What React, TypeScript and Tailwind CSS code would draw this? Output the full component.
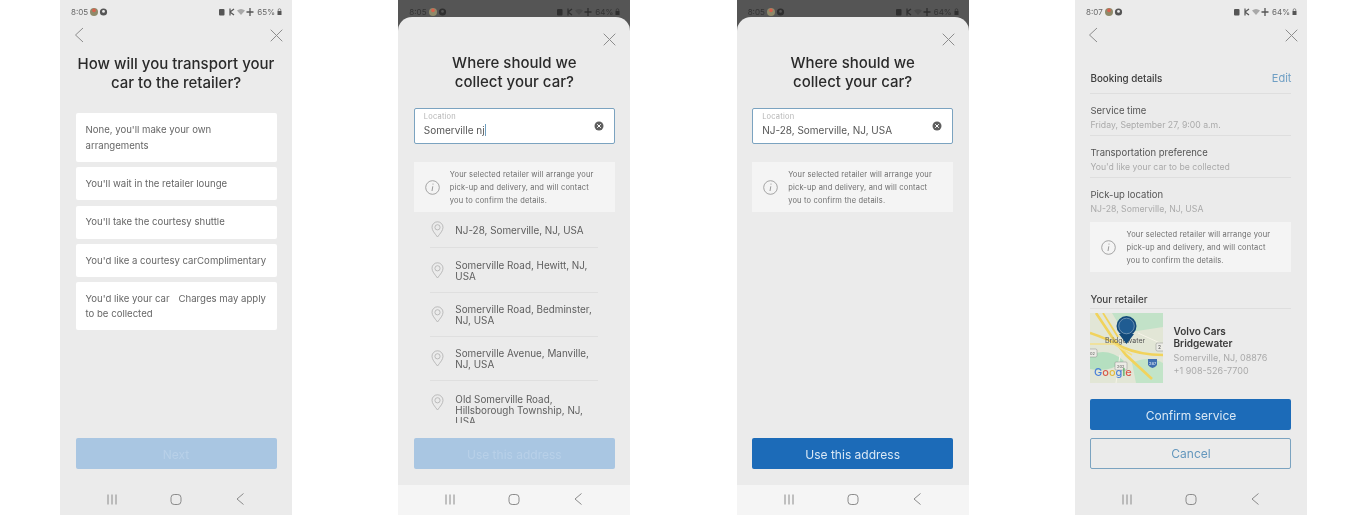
import React from "react";

function Back() {
  return (
    <svg width="10" height="16" viewBox="0 0 10 16" fill="none" stroke="#8c8c8c" strokeWidth="1">
      <path d="M9 1 L1.5 8 L9 15" />
    </svg>
  );
}

function Close() {
  return (
    <svg width="13" height="13" viewBox="0 0 13 13" fill="none" stroke="#8c8c8c" strokeWidth="1">
      <path d="M0.7 0.7 L12.3 12.3 M12.3 0.7 L0.7 12.3" />
    </svg>
  );
}

function Status({ time, pct, dim = false }: { time: string; pct: string; dim?: boolean }) {
  const c = dim ? "#2f2f2f" : "#555555";
  const tc = dim ? "text-[#333333]" : "text-[#666666]";
  return (
    <div className={`flex items-center justify-between pl-[11px] pr-[10px] ${dim ? "h-[17px] pt-[6px]" : "h-[22px] pt-[1px]"}`}>
      <div className="flex items-center gap-[1px]">
        <span className={`text-[8px] leading-none ${tc}`}>{time}</span>
        <svg width="20" height="10" viewBox="0 0 20 10">
          <circle cx="5" cy="5" r="4" fill="#8f8a6a" />
          <circle cx="5" cy="3.4" r="1.8" fill="#d9604c" />
          <circle cx="14.5" cy="5" r="3.6" fill={c} />
          <circle cx="14.5" cy="4.4" r="1.4" fill={dim ? "#555555" : "#ebebeb"} />
        </svg>
      </div>
      <div className="flex items-center gap-[1px]">
        <svg width="36" height="10" viewBox="0 0 36 10" className="mr-[1px]">
          <rect x="0" y="2" width="5.5" height="6.5" rx="1" fill={c} />
          <path d="M11 1.5 V8.5 M11 5 L15 2 M11 5 L15 8" stroke={c} strokeWidth="1.2" fill="none" />
          <path d="M18 3.5 Q22 0.5 26 3.5 L22 8 Z" fill={dim ? "#4a4a4a" : "#a8a8a8"} />
          <path d="M31 1 V9 M27.5 5 H34.5" stroke={c} strokeWidth="1.3" />
        </svg>
        <span className={`text-[8px] leading-none ${tc}`}>{pct}</span>
        <svg width="5" height="8" viewBox="0 0 5 8" className="ml-[1px]">
          <rect x="0.5" y="3" width="4" height="4" fill={c} />
          <path d="M1.2 3 V2 a1.3 1.3 0 0 1 2.6 0 V3" stroke={c} strokeWidth="0.6" fill="none" />
        </svg>
      </div>
    </div>
  );
}

function Nav({ light = false }: { light?: boolean }) {
  return (
    <div className={`h-[30px] flex items-center justify-between px-[45px] pb-[2px] shrink-0 ${light ? "bg-[#f5f5f5]" : ""}`}>
      <svg width="14" height="11" viewBox="0 0 14 11" fill="none" stroke="#8a8a8a" strokeWidth="1">
        <path d="M3 0.5 V10.5 M7 0.5 V10.5 M11 0.5 V10.5" />
      </svg>
      <svg width="14" height="11" viewBox="0 0 14 11" fill="none" stroke="#8a8a8a" strokeWidth="1">
        <rect x="2" y="0.5" width="10" height="10" rx="3.2" />
      </svg>
      <svg width="14" height="12" viewBox="0 0 14 12" fill="none" stroke="#8a8a8a" strokeWidth="1">
        <path d="M10.5 0.5 L4 6 L10.5 11.5" />
      </svg>
    </div>
  );
}

function Info({ className = "" }: { className?: string }) {
  return (
    <div className={`h-[50px] bg-[#f4f4f4] flex items-center pl-[11px] ${className}`}>
      <svg width="15" height="15" viewBox="0 0 15 15" fill="none" className="shrink-0">
        <circle cx="7.5" cy="7.5" r="6.8" stroke="#8f8f8f" strokeWidth="0.8" />
        <path d="M8 3.6 v1 M7.8 6.3 L7 11" stroke="#8f8f8f" strokeWidth="0.9" />
      </svg>
      <p className="ml-[10px] text-[7.5px] leading-[13px] tracking-[0.18px] text-[#6c6c6c] whitespace-nowrap">
        Your selected retailer will arrange your
        <br />
        pick-up and delivery, and will contact
        <br />
        you to confirm the details.
      </p>
    </div>
  );
}

function Pin() {
  return (
    <svg width="13" height="17" viewBox="0 0 13 17" fill="none" stroke="#b4b4b4" strokeWidth="0.9" className="shrink-0">
      <path d="M6.5 16 C3.5 12 1 9.5 1 6.3 A5.5 5.5 0 0 1 12 6.3 C12 9.5 9.5 12 6.5 16 Z" />
      <circle cx="6.5" cy="6.3" r="2.6" />
    </svg>
  );
}

function Card({ h, children }: { h: string; children: React.ReactNode }) {
  return (
    <div className={`bg-white rounded-[2px] px-[10px] flex items-center text-[9.6px] leading-[15.5px] text-[#666666] ${h}`}>
      <div className="whitespace-nowrap">{children}</div>
    </div>
  );
}

function Heading({ children }: { children: React.ReactNode }) {
  return <h1 className="text-center text-[15px] leading-[19px] font-medium text-[#2a2a2a]">{children}</h1>;
}

function Button({ children, on = false }: { children: React.ReactNode; on?: boolean }) {
  return (
    <div className={`h-[31px] pt-[2px] rounded-[2px] flex items-center justify-center text-[12px] ${on ? "bg-[#1c6bb8] text-[#d9e8f5]" : "bg-[#a9c6e2] text-[#b8d0e8]"}`}>
      {children}
    </div>
  );
}

function Phone1() {
  return (
    <div className="w-[232px] h-[515px] bg-[#ebebeb] flex flex-col">
      <Status time="8:05" pct="65%" />
      <div className="flex justify-between items-center pl-[14px] pr-[9px] mt-[5px] h-[16px]">
        <Back />
        <Close />
      </div>
      <div className="mt-[11px]">
        <Heading>
          How will you transport your
          <br />
          car to the retailer?
        </Heading>
      </div>
      <div className="mt-[21px] mx-[15.5px] flex flex-col gap-[5.3px]">
        <Card h="h-[49px]">
          None, you'll make your own
          <br />
          arrangements
        </Card>
        <Card h="h-[33px]">You'll wait in the retailer lounge</Card>
        <Card h="h-[33px]">You'll take the courtesy shuttle</Card>
        <Card h="h-[33px]">You'd like a courtesy carComplimentary</Card>
        <Card h="h-[48px]">
          <span className="mr-[9px]">You'd like your car</span>Charges may apply
          <br />
          to be collected
        </Card>
      </div>
      <div className="mt-auto mx-[15.5px] mb-[16px]">
        <Button>Next</Button>
      </div>
      <Nav />
    </div>
  );
}

const places: { lines: string[]; h: string; last?: boolean }[] = [
  { lines: ["NJ-28, Somerville, NJ, USA"], h: "h-[36px]" },
  { lines: ["Somerville Road, Hewitt, NJ,", "USA"], h: "h-[45px]" },
  { lines: ["Somerville Road, Bedminster,", "NJ, USA"], h: "h-[44px]" },
  { lines: ["Somerville Avenue, Manville,", "NJ, USA"], h: "h-[44px]" },
  { lines: ["Old Somerville Road,", "Hillsborough Township, NJ,", "USA"], h: "h-[42px]", last: true },
];

function Sheet({ value, caret = false, list = false, on = false }: { value: string; caret?: boolean; list?: boolean; on?: boolean }) {
  return (
    <div className="w-[232px] h-[515px] bg-[#555555] flex flex-col">
      <Status time="8:05" pct="64%" dim />
      <div className="flex-1 bg-[#ebebeb] rounded-t-[14px] flex flex-col min-h-0">
        <div className="flex justify-end pr-[14px] pt-[16px] h-[30px]">
          <Close />
        </div>
        <div className="mt-[6px]">
          <Heading>
            Where should we
            <br />
            collect your car?
          </Heading>
        </div>
        <div className="mt-[17px] mx-[15.5px] h-[36px] bg-white border border-[#7ba3c0] rounded-[2px] pl-[9px] pr-[10px] pb-[3px] flex items-center justify-between">
          <div className="flex flex-col">
            <span className="text-[7.5px] leading-[10px] text-[#b5b5b5] tracking-[0.2px]">Location</span>
            <span className="text-[10px] leading-[14px] mt-[1px] text-[#555555] flex items-center">
              {value}
              {caret && <span className="inline-block w-[1px] h-[12px] bg-[#6f9fc0]" />}
            </span>
          </div>
          <svg width="10" height="10" viewBox="0 0 10 10" className="mt-[3px]">
            <circle cx="5" cy="5" r="4.5" fill="#5f5f5f" />
            <path d="M3.2 3.2 L6.8 6.8 M6.8 3.2 L3.2 6.8" stroke="#ffffff" strokeWidth="1" />
          </svg>
        </div>
        <Info className="mt-[18px] mx-[15.5px]" />
        <div className="h-[211px] overflow-hidden">
          {list &&
            places.map((p) => (
              <div key={p.lines[0]} className={`ml-[32px] mr-[32px] ${p.h} flex items-center ${p.last ? "" : "border-b border-[#dfdfdf]"}`}>
                <span className="ml-[1px] flex">
                  <Pin />
                </span>
                <div className={`ml-[11px] text-[9.9px] leading-[11px] text-[#5e5e5e] whitespace-nowrap ${p.last ? "mt-[16px]" : "mt-[1px]"}`}>
                  {p.lines.map((l) => (
                    <div key={l}>{l}</div>
                  ))}
                </div>
              </div>
            ))}
        </div>
        <div className="mt-auto mx-[15.5px] mb-[16px]">
          <Button on={on}>Use this address</Button>
        </div>
        <Nav light />
      </div>
    </div>
  );
}

function Row({ title, sub, line = true }: { title: string; sub: string; line?: boolean }) {
  return (
    <div className={`h-[42px] pt-[10px] ${line ? "border-b border-[#dedede]" : ""}`}>
      <div className="text-[9.5px] leading-[13px] text-[#555555]">{title}</div>
      <div className="text-[8.7px] leading-[11px] mt-[3px] text-[#aaaaaa]">{sub}</div>
    </div>
  );
}

function MapThumb() {
  return (
    <svg width="73" height="70" viewBox="0 0 73 70" className="shrink-0">
      <rect width="73" height="70" fill="#e2e6d6" />
      <path d="M0 0 H22 L34 20 L73 14 V0 Z" fill="#c2e2c8" />
      <path d="M0 42 Q18 34 34 48 Q20 60 0 56 Z" fill="#b5dfc0" />
      <path d="M42 50 Q58 42 73 50 V70 H46 Z" fill="#c2e4c8" />
      <path d="M6 0 L22 24 L36 42 L62 66" stroke="#f1d35c" strokeWidth="2.6" fill="none" />
      <path d="M13 0 L28 24" stroke="#f1d35c" strokeWidth="1.8" fill="none" />
      <path d="M0 20 Q18 26 32 34 Q50 42 73 42" stroke="#f1d35c" strokeWidth="2.6" fill="none" />
      <path d="M0 31 H24 L42 42" stroke="#f4e08a" strokeWidth="1.6" fill="none" />
      <path d="M48 20 L70 30 M30 42 L26 70" stroke="#f5f3e8" strokeWidth="1" fill="none" />
      <rect x="-1" y="36" width="8" height="8" rx="1.5" fill="#ecece6" stroke="#777777" strokeWidth="0.4" />
      <text x="0" y="42" fontSize="4" fill="#555555">02</text>
      <rect x="66" y="30" width="8" height="8" rx="1.5" fill="#ecece6" stroke="#777777" strokeWidth="0.4" />
      <text x="68" y="36" fontSize="5" fill="#555555">2</text>
      <rect x="25" y="49" width="12" height="8" rx="1" fill="#ecece6" stroke="#777777" strokeWidth="0.4" />
      <text x="27" y="55" fontSize="4" fill="#555555">202</text>
      <path d="M58 46 H67 V52 Q62.5 58 58 52 Z" fill="#3f6fb0" />
      <text x="59" y="52" fontSize="4" fill="#ffffff">287</text>
      <text x="15" y="30" fontSize="7" fill="#555555">Bridgewater</text>
      <text x="4" y="63" fontSize="11" fontWeight="500">
        <tspan fill="#4a7fd8">G</tspan>
        <tspan fill="#d9574a">o</tspan>
        <tspan fill="#e2b93f">o</tspan>
        <tspan fill="#4a7fd8">g</tspan>
        <tspan fill="#4caa5c">l</tspan>
        <tspan fill="#d9574a">e</tspan>
      </text>
      <path d="M29 21 L36.5 31 L44 21 Z" fill="#134a7a" />
      <circle cx="36.5" cy="13" r="10" fill="#134a7a" />
      <circle cx="36.5" cy="13" r="7.8" fill="#1f5c92" stroke="#9fb8cc" strokeWidth="0.6" />
    </svg>
  );
}

function Phone4() {
  return (
    <div className="w-[232px] h-[515px] bg-[#ebebeb] flex flex-col">
      <Status time="8:07" pct="64%" />
      <div className="flex justify-between items-center pl-[13px] pr-[9px] mt-[5px] h-[16px]">
        <Back />
        <Close />
      </div>
      <div className="mx-[15.5px] mt-[29px]">
        <div className="h-[22px] flex justify-between border-b border-[#dedede] text-[9.8px] leading-[13px]">
          <span className="font-medium text-[#3a3a3a]">Booking details</span>
          <span className="text-[11px] text-[#6f9fc4]">Edit</span>
        </div>
        <Row title="Service time" sub="Friday, September 27, 9:00 a.m." />
        <Row title="Transportation preference" sub="You'd like your car to be collected" />
        <Row title="Pick-up location" sub="NJ-28, Somerville, NJ, USA" line={false} />
        <Info className="mt-[2px]" />
        <div className="mt-[22px] h-[15px] border-b border-[#dedede] text-[9.8px] leading-[12px] font-medium text-[#444444]">
          Your retailer
        </div>
        <div className="mt-[4px] flex items-center">
          <MapThumb />
          <div className="ml-[10px] mt-[6px]">
            <div className="text-[10px] leading-[12.5px] font-semibold text-[#3a3a3a]">
              Volvo Cars
              <br />
              Bridgewater
            </div>
            <div className="text-[9px] leading-[13.5px] text-[#aaaaaa] mt-[1px]">
              Somerville, NJ, 08876
              <br />
              +1 908-526-7700
            </div>
          </div>
        </div>
      </div>
      <div className="mt-auto mx-[15.5px] mb-[16px] flex flex-col gap-[8px]">
        <Button on>Confirm service</Button>
        <div className="h-[31px] pt-[1px] rounded-[2px] border border-[#7ba3c0] flex items-center justify-center text-[12px] text-[#6497bd]">
          Cancel
        </div>
      </div>
      <Nav />
    </div>
  );
}

export default function App() {
  return (
    <div className="h-[515px] w-[1366px] overflow-hidden bg-white flex justify-between pl-[60px] pr-[59px] font-['Inter','Noto_Sans',sans-serif] blur-[0.35px]">
      <Phone1 />
      <Sheet value="Somerville nj" caret list />
      <Sheet value="NJ-28, Somerville, NJ, USA" on />
      <Phone4 />
    </div>
  );
}
